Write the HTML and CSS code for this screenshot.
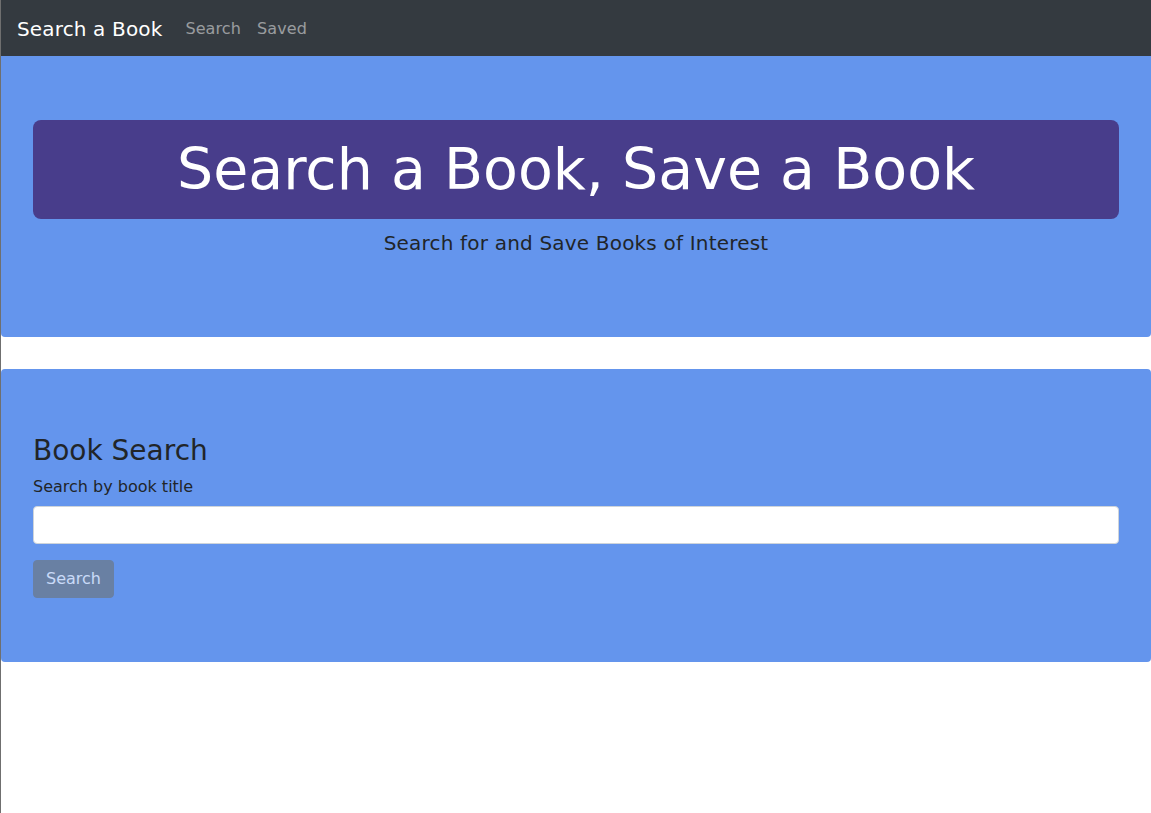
FILE: index.html
```html
<!DOCTYPE html>
<html lang="en">
<head>
<meta charset="utf-8">
<title>Search a Book</title>
<link rel="stylesheet" href="styles.css">
</head>
<body>
<div class="page">
  <nav class="navbar">
    <a class="brand" href="#">Search a Book</a>
    <a class="nav-link" href="#">Search</a>
    <a class="nav-link" href="#">Saved</a>
  </nav>
  <header class="jumbotron">
    <h1 class="hero-title">Search a Book, Save a Book</h1>
    <p class="lead">Search for and Save Books of Interest</p>
  </header>
  <section class="jumbotron">
    <h3 class="section-title">Book Search</h3>
    <form class="search-form">
      <div class="form-group">
        <label class="form-label" for="title">Search by book title</label>
        <input class="form-control" id="title" type="text">
      </div>
      <button class="btn" type="button" disabled>Search</button>
    </form>
  </section>
</div>
</body>
</html>
```
FILE: styles.css
```css
* { box-sizing: border-box; }
html, body { margin: 0; padding: 0; }
body {
  font-family: "DejaVu Sans", Verdana, sans-serif;
  font-size: 16px;
  line-height: 1.5;
  color: #212529;
  background: #fff;
}
.page {
  min-height: 813px;
  border-left: 1px solid #6f6f6f;
}
.navbar {
  display: flex;
  align-items: center;
  height: 56px;
  padding: 9px 16px 7px;
  background: #343a40;
}
.brand {
  font-size: 20px;
  letter-spacing: .15px;
  color: #fff;
  text-decoration: none;
  margin-right: 15px;
  line-height: 1.5;
}
.nav-link {
  color: rgba(255,255,255,.5);
  text-decoration: none;
  padding: 8px;
  font-size: 16px;
  letter-spacing: .1px;
}
.jumbotron {
  background: #6495ed;
  padding: 64px 32px;
  margin-bottom: 32px;
  border-radius: 0 0 4px 4px;
}
section.jumbotron { border-radius: 4px; }
.hero-title {
  margin: 0 0 9px;
  background: #483d8b;
  color: #fff;
  border-radius: 8px;
  text-align: center;
  font-size: 57px;
  font-weight: 400;
  line-height: 68px;
  padding: 15px 0 16px;
}
.lead {
  margin: 0 0 15px;
  text-align: center;
  font-size: 20px;
  letter-spacing: .19px;
  line-height: 1.5;
}
.section-title {
  margin: 1px 0 7px;
  font-size: 28px;
  font-weight: 400;
  line-height: 1.2;
}
.search-form { margin: 0; }
.form-group { margin-bottom: 16px; }
.form-label {
  display: block;
  margin-bottom: 7px;
  font-size: 16px;
}
.form-control {
  display: block;
  width: 100%;
  height: 38px;
  padding: 6px 12px;
  font: inherit;
  border: 1px solid #ced4da;
  border-radius: 4px;
  background: #fff;
}
.btn {
  display: inline-block;
  height: 38px;
  padding: 6px 12px;
  font: inherit;
  color: #fff;
  background: #6c757d;
  border: 1px solid #6c757d;
  border-radius: 4px;
  opacity: .65;
}
```
